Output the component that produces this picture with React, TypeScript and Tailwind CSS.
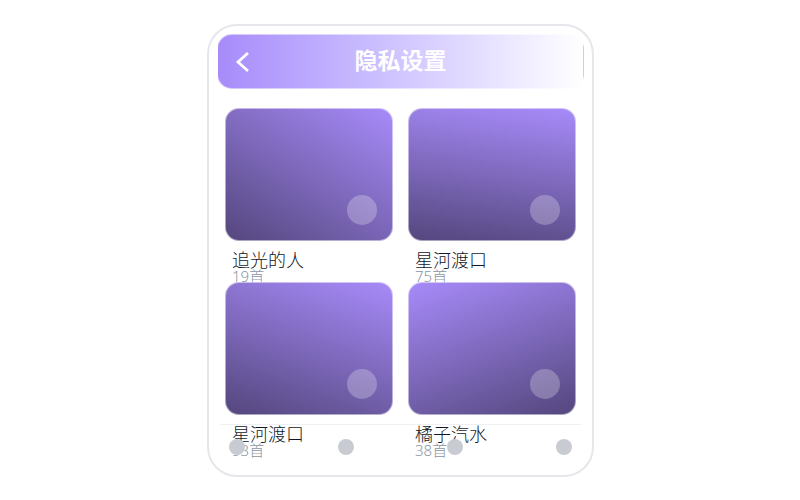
type Album = { title: string; count: number; cover: string };

const albums: Album[] = [
  { title: "追光的人", count: 19, cover: "bg-[linear-gradient(32deg,#54467d,#7e69bc_50%,#a78bfa)]" },
  { title: "星河渡口", count: 75, cover: "bg-[linear-gradient(8deg,#54467d,#7e69bc_50%,#a78bfa)]" },
  { title: "星河渡口", count: 93, cover: "bg-[linear-gradient(20deg,#54467d,#7e69bc_50%,#a78bfa)]" },
  { title: "橘子汽水", count: 38, cover: "bg-[linear-gradient(160deg,#a78bfa,#7e69bc_50%,#54467d)]" },
];

const tabs = ["首页", "发现", "收藏", "我的"];

function AlbumItem({ title, count, cover }: Album) {
  return (
    <li className="h-[174px]">
      <div className={`relative flex h-[133px] items-end justify-end rounded-[14px] border border-white/50 bg-origin-border p-[15px] ${cover}`}>
        <button type="button" aria-label={`播放${title}`} className="size-[30px] rounded-full bg-white/25" />
      </div>
      <div className="px-[7px] pt-[10px] font-light">
        <h2 className="text-[18px] leading-[18px] text-[#111827]">{title}</h2>
        <p className="text-[15px] leading-[14px] text-[#8b95a3]">{count}首</p>
      </div>
    </li>
  );
}

export default function App() {
  return (
    <div className="flex min-h-screen items-start justify-center bg-white pt-6 pl-px font-['Noto_Sans','Noto_Sans_CJK_SC',sans-serif]">
      <main className="w-full max-w-[387px] rounded-[30px] border-2 border-[#e5e7eb] px-2 pt-2">
        <header className="grid h-[55px] grid-cols-[50px_1fr_50px] items-center rounded-[15px] border border-white/50 bg-linear-to-r from-[#a78bfa] to-white text-white">
          <button type="button" aria-label="返回" className="flex h-full items-center justify-center">
            <svg viewBox="0 0 28 28" className="size-7" fill="none" stroke="currentColor" strokeWidth="2.8">
              <path d="M19 5 9 14 19 23" />
            </svg>
          </button>
          <h1 className="pb-[3px] text-center text-[23px] leading-8 font-bold">隐私设置</h1>
        </header>
        <ul className="grid grid-cols-2 gap-x-[15px] px-2 pt-[19px]">
          {albums.map((album, i) => (
            <AlbumItem key={i} {...album} />
          ))}
        </ul>
        <nav className="relative z-10 mx-[3px] -mt-8 flex h-[51px] items-start justify-between border-t border-[#eff0f2] px-[9px] pt-[14px]">
          {tabs.map((tab) => (
            <button key={tab} type="button" aria-label={tab} className="size-4 rounded-full bg-[#c8ccd2]" />
          ))}
        </nav>
      </main>
    </div>
  );
}
